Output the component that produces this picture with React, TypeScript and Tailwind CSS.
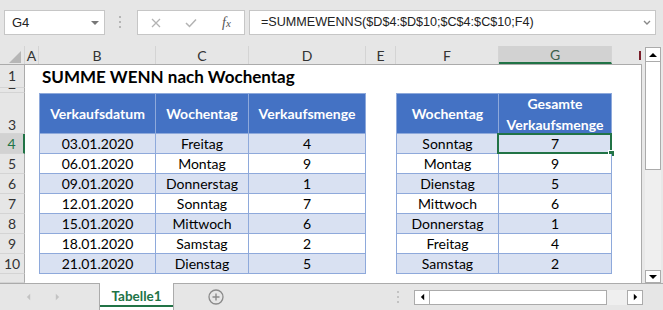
import React from 'react';

const blue = 'bg-[#4472c4]';
const band = 'bg-[#d9e1f2]';

const leftRows: [string, string, number][] = [
  ['03.01.2020', 'Freitag', 4],
  ['06.01.2020', 'Montag', 9],
  ['09.01.2020', 'Donnerstag', 1],
  ['12.01.2020', 'Sonntag', 7],
  ['15.01.2020', 'Mittwoch', 6],
  ['18.01.2020', 'Samstag', 2],
  ['21.01.2020', 'Dienstag', 5],
];

const rightRows: [string, number][] = [
  ['Sonntag', 7],
  ['Montag', 9],
  ['Dienstag', 5],
  ['Mittwoch', 6],
  ['Donnerstag', 1],
  ['Freitag', 4],
  ['Samstag', 2],
];

const cols = [
  { k: 'A', w: 'w-[14px]' },
  { k: 'B', w: 'w-[117px]' },
  { k: 'C', w: 'w-[93px]' },
  { k: 'D', w: 'w-[117px]' },
  { k: 'E', w: 'w-[30px]' },
  { k: 'F', w: 'w-[103px]' },
  { k: 'G', w: 'w-[113px]' },
  { k: 'H', w: 'w-[29px]' },
];

const cell = 'shrink-0 flex items-center justify-center border-r border-b border-[#8ea9db] text-[14px] text-black';

function Row({ n, h, sel, align = 'items-center', children }: { n: string; h: string; sel?: boolean; align?: string; children?: React.ReactNode }) {
  return (
    <div className={`flex ${h}`}>
      <div
        className={`w-[25px] shrink-0 flex ${align} justify-center overflow-hidden border-b border-[#d4d4d4] text-[14px] leading-[16px] ${
          sel ? 'bg-[#d2d2d2] border-r-2 border-r-[#217346] text-[#217346]' : 'bg-[#e6e6e6] border-r border-r-[#ababab] text-[#333]'
        }`}
      >
        {n}
      </div>
      <div className="flex w-[617px] bg-white border-r border-[#ababab]">{children}</div>
    </div>
  );
}

function Tri({ dir, cls }: { dir: 'up' | 'down' | 'left' | 'right'; cls: string }) {
  const pts = {
    up: '0,5 4,1 8,5',
    down: '0,1 4,5 8,1',
    left: '5,0 1,4 5,8',
    right: '1,0 5,4 1,8',
  }[dir];
  const vb = dir === 'up' || dir === 'down' ? '0 0 8 6' : '0 0 6 8';
  return (
    <svg viewBox={vb} className={cls}>
      <polygon points={pts} fill="currentColor" />
    </svg>
  );
}

export default function App() {
  return (
    <div className="w-[663px] h-[310px] overflow-hidden flex flex-col bg-[#e6e6e6] font-['Lato',sans-serif]">
      {/* formula bar */}
      <div className="h-[46px] shrink-0 flex items-start pt-[10px] font-['Liberation_Sans',sans-serif]">
        <div className="ml-[4px] w-[101px] h-[25px] bg-white border border-[#c6c6c6] flex items-center justify-between pl-[7px] pr-[5px]">
          <span className="text-[13px] text-[#222]">G4</span>
          <Tri dir="down" cls="w-[8px] h-[6px] text-[#777]" />
        </div>
        <svg viewBox="0 0 3 13" className="ml-[14px] mt-[6px] w-[3px] h-[13px] text-[#b5b5b5]">
          <rect x="0" y="0" width="2" height="2" fill="currentColor" />
          <rect x="0" y="5" width="2" height="2" fill="currentColor" />
          <rect x="0" y="10" width="2" height="2" fill="currentColor" />
        </svg>
        <div className="ml-[15px] w-[108px] h-[25px] bg-white border border-[#c6c6c6] flex items-center">
          <svg viewBox="0 0 10 10" className="ml-[13px] w-[10px] h-[10px]">
            <path d="M1 1 L9 9 M9 1 L1 9" stroke="#b3b3b3" strokeWidth="1.3" />
          </svg>
          <svg viewBox="0 0 12 10" className="ml-[24px] w-[12px] h-[10px]">
            <path d="M1 5 L4.5 8.5 L11 1.5" stroke="#b3b3b3" strokeWidth="1.5" fill="none" />
          </svg>
          <span className="ml-[25px] font-['Liberation_Serif',serif] italic text-[14px] text-[#555] leading-none">
            f<span className="text-[11px]">x</span>
          </span>
        </div>
        <div className="ml-[4px] w-[407px] h-[25px] bg-white border border-[#c6c6c6] flex items-center justify-between pl-[11px] pr-[4px]">
          <span className="text-[12.6px] text-[#222] whitespace-nowrap">=SUMMEWENNS($D$4:$D$10;$C$4:$C$10;F4)</span>
          <svg viewBox="0 0 8 6" className="w-[8px] h-[6px]">
            <path d="M1 1 L4 4 L7 1" stroke="#888" strokeWidth="1.4" fill="none" />
          </svg>
        </div>
      </div>

      {/* sheet + vertical scrollbar */}
      <div className="h-[237px] shrink-0 flex">
        <div className="w-[642px] flex flex-col overflow-hidden">
          <div className="h-[19px] shrink-0 flex border-b border-[#ababab] bg-[#e6e6e6]">
            <div className="w-[25px] shrink-0 flex items-end justify-end pr-[3px] pb-[1px] border-r border-[#d4d4d4]">
              <svg viewBox="0 0 12 12" className="w-[12px] h-[12px]">
                <polygon points="12,0 12,12 0,12" fill="#b6b6b6" />
              </svg>
            </div>
            {cols.map((c) => (
              <div
                key={c.k}
                className={`${c.w} shrink-0 flex items-center justify-center text-[14px] border-r border-[#d4d4d4] ${
                  c.k === 'G' ? 'bg-[#d2d2d2] border-b-2 border-b-[#217346] text-[#3b5f4a]' : 'text-[#333]'
                } ${c.k === 'H' ? 'justify-end border-r-0' : ''}`}
              >
                {c.k === 'H' ? <span className="w-[2px] h-[9px] bg-[#7a1f2b]" /> : c.k}
              </div>
            ))}
          </div>

          <Row n="1" h="h-[23px]">
            <div className="w-[14px] shrink-0" />
            <div className="pl-[3px] flex items-center text-[17px] font-bold text-black whitespace-nowrap">SUMME WENN nach Wochentag</div>
          </Row>
          <Row n="2" h="h-[5px]" align="items-end" />
          <Row n="3" h="h-[41px]" align="items-end">
            <div className="w-[14px] shrink-0" />
            <div className={`${cell} w-[117px] border-l border-t ${blue} text-white font-bold`}>Verkaufsdatum</div>
            <div className={`${cell} w-[93px] border-t ${blue} text-white font-bold`}>Wochentag</div>
            <div className={`${cell} w-[117px] border-t ${blue} text-white font-bold`}>Verkaufsmenge</div>
            <div className="w-[30px] shrink-0" />
            <div className={`${cell} w-[103px] border-l border-t ${blue} text-white font-bold`}>Wochentag</div>
            <div className={`${cell} w-[113px] border-t ${blue} text-white font-bold flex-col leading-[21px]`}>
              <span>Gesamte</span>
              <span>Verkaufsmenge</span>
            </div>
          </Row>
          {leftRows.map((r, i) => {
            const bg = i % 2 === 0 ? band : 'bg-white';
            const rr = rightRows[i];
            return (
              <Row key={i} n={String(i + 4)} h="h-[20px]" sel={i === 0}>
                <div className="w-[14px] shrink-0" />
                <div className={`${cell} w-[117px] border-l ${bg}`}>{r[0]}</div>
                <div className={`${cell} w-[93px] ${bg}`}>{r[1]}</div>
                <div className={`${cell} w-[117px] ${bg}`}>{r[2]}</div>
                <div className="w-[30px] shrink-0" />
                <div className={`${cell} w-[103px] border-l ${bg}`}>{rr[0]}</div>
                <div className={`${cell} w-[113px] ${bg} relative`}>
                  {rr[1]}
                  {i === 0 && (
                    <>
                      <span className="absolute -left-[2px] -top-[1px] -right-[1px] -bottom-[1px] border-2 border-[#217346]" />
                      <span className="absolute -right-[4px] -bottom-[4px] w-[7px] h-[7px] bg-[#217346] border border-white" />
                    </>
                  )}
                </div>
              </Row>
            );
          })}
          <Row n="11" h="h-[9px]" align="items-start pt-[5px]" />
        </div>

        {/* vertical scrollbar */}
        <div className="w-[21px] shrink-0 flex flex-col pl-[3px] pr-[2px] pt-[1px] bg-[#e8e8e8]">
          <div className="h-[15px] bg-white border border-[#ababab] flex items-center justify-center">
            <Tri dir="up" cls="w-[8px] h-[6px] text-black" />
          </div>
          <div className="h-[108px] bg-white border-x border-b border-[#ababab]" />
          <div className="flex-1 bg-[#efefef]" />
          <div className="h-[13px] bg-white border border-[#ababab] flex items-center justify-center">
            <Tri dir="down" cls="w-[8px] h-[6px] text-black" />
          </div>
        </div>
      </div>

      {/* sheet tabs */}
      <div className="h-[27px] shrink-0 flex items-center border-t border-[#ababab] bg-[#e6e6e6]">
        <div className="w-[99px] shrink-0 flex items-center">
          <Tri dir="left" cls="ml-[26px] w-[5px] h-[8px] text-[#c3c3c3]" />
          <Tri dir="right" cls="ml-[24px] w-[5px] h-[8px] text-[#c3c3c3]" />
        </div>
        <div className="w-[75px] self-stretch -mt-[1px] bg-white border-x border-[#ababab] flex flex-col items-center justify-center relative">
          <span className="text-[13.5px] font-bold text-[#217346] leading-none">Tabelle1</span>
          <span className="absolute left-0 right-0 bottom-[3px] h-[2px] bg-[#217346]" />
        </div>
        <svg viewBox="0 0 16 16" className="ml-[34px] w-[16px] h-[16px]">
          <circle cx="8" cy="8" r="7" stroke="#8a8a8a" strokeWidth="1.3" fill="none" />
          <path d="M8 4.5 V11.5 M4.5 8 H11.5" stroke="#8a8a8a" strokeWidth="1.4" />
        </svg>
        <svg viewBox="0 0 2 12" className="ml-[173px] w-[2px] h-[12px]">
          <rect x="0" y="0" width="2" height="2" fill="#c3c3c3" />
          <rect x="0" y="5" width="2" height="2" fill="#c3c3c3" />
          <rect x="0" y="10" width="2" height="2" fill="#c3c3c3" />
        </svg>
        <div className="ml-[15px] w-[229px] h-[15px] flex">
          <div className="w-[16px] bg-white border border-[#ababab] flex items-center justify-center">
            <Tri dir="left" cls="w-[5px] h-[8px] text-black" />
          </div>
          <div className="w-[177px] bg-white border-y border-r border-[#ababab]" />
          <div className="w-[20px] bg-[#efefef]" />
          <div className="w-[16px] bg-white border border-[#ababab] flex items-center justify-center">
            <Tri dir="right" cls="w-[5px] h-[8px] text-black" />
          </div>
        </div>
      </div>
    </div>
  );
}
